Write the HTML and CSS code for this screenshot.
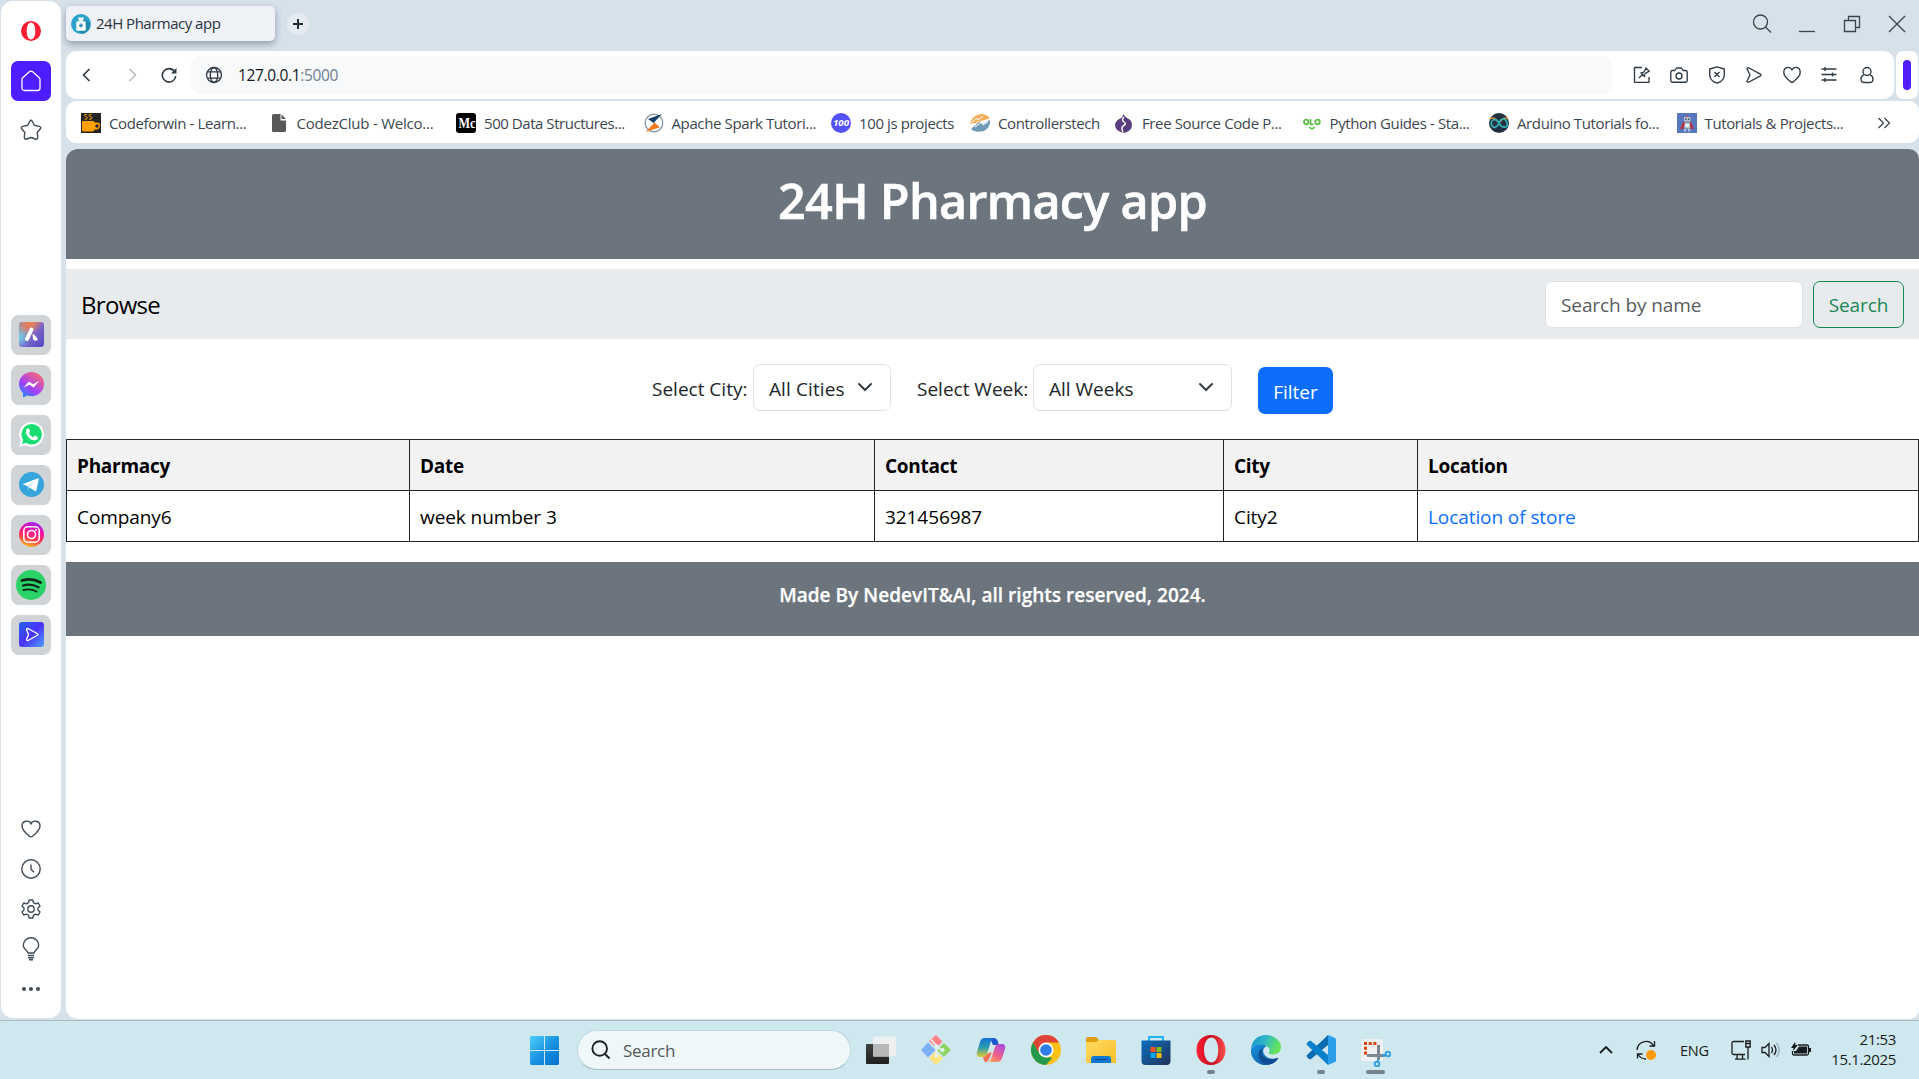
FILE: index.html
```html
<!DOCTYPE html>
<html lang="en">
<head>
<meta charset="utf-8">
<title>24H Pharmacy app</title>
<link rel="stylesheet" href="styles.css">
</head>
<body>
<div class="window">
  <aside class="sidebar">
    <div class="side-top">
      <svg class="side-logo" viewBox="0 0 20 20" width="20" height="20"><path fill="#fa1e34" fill-rule="evenodd" d="M10 0a10 10 0 1 0 0 20a10 10 0 0 0 0-20zM10 1.500c2.800 0 4.300 3.800 4.300 8.500s-1.500 8.500-4.300 8.500s-4.300-3.800-4.300-8.500s1.500-8.500 4.300-8.500z"/></svg>
      <div class="side-home"><svg viewBox="0 0 20 22" width="20" height="22" fill="none" stroke="#fff" stroke-width="1.300"><path d="M1 9.500Q1 8.500 2 7.500L8.300 1.800Q10 .4 11.700 1.800L18 7.500Q19 8.500 19 9.500V18Q19 20.500 16.500 20.500H3.500Q1 20.500 1 18z"/></svg></div>
      <svg class="side-star" viewBox="0 0 22 22" width="22" height="22" fill="none" stroke="#414b55" stroke-width="1.400" stroke-linejoin="round"><path d="M9.700 2.300Q11 .3 12.300 2.300L14.300 6.200L19.300 7.400Q21.700 8.200 20.200 10L17.200 13.500L17.700 18Q17.600 20.800 15.400 20L11 18.500L6.600 20Q4.400 20.800 4.300 18L4.800 13.500L1.800 10Q.3 8.200 2.700 7.400L7.700 6.200z"/></svg>
    </div>
    <div class="side-apps">
      <div class="app"><svg viewBox="0 0 25 25" width="25" height="25"><defs><linearGradient id="aria" x1="0" y1="0" x2="1" y2="1"><stop offset="0" stop-color="#8b91b8"/><stop offset=".25" stop-color="#d07f75"/><stop offset=".5" stop-color="#7e68c5"/><stop offset="1" stop-color="#5148c8"/></linearGradient><radialGradient id="ariaB" cx="0" cy=".6" r=".5"><stop offset="0" stop-color="#66d3f2"/><stop offset="1" stop-color="#66d3f2" stop-opacity="0"/></radialGradient><radialGradient id="ariaC" cx=".45" cy="0" r=".5"><stop offset="0" stop-color="#f0804f"/><stop offset="1" stop-color="#f0804f" stop-opacity="0"/></radialGradient></defs><rect width="25" height="25" rx="3" fill="url(#aria)"/><rect width="25" height="25" rx="3" fill="url(#ariaB)"/><rect width="25" height="25" rx="3" fill="url(#ariaC)"/><path stroke="#fff" stroke-width="4" stroke-linecap="round" d="M12.500 7.500L8 17"/><path fill="#fff" d="M13.500 12q3 .5 5.500 6q-4 2-5-1z"/></svg></div>
      <div class="app"><svg viewBox="0 0 25 26" width="25" height="26"><defs><linearGradient id="msg" x1=".1" y1="1" x2=".8" y2="0"><stop offset="0" stop-color="#1594ff"/><stop offset=".4" stop-color="#a040ff"/><stop offset="1" stop-color="#ff6a70"/></linearGradient></defs><path fill="url(#msg)" d="M12.500 0C5.500 0 0 5 0 12c0 3.500 1.500 6.500 4 9v4.500l4.500-2c8 2.500 16.500-2.500 16.500-11.500C25 5 19.500 0 12.500 0z"/><path fill="#fff" d="M4.500 15.500l5.500-6 4 2.800 6.200-3.600-5.500 6.800-4-2.800z"/></svg></div>
      <div class="app"><svg viewBox="0 0 25 25" width="25" height="25"><path fill="#fff" d="M0 25l1.800-6.300A12.400 12.400 0 1 1 6.500 23.300z"/><circle cx="12.700" cy="12.300" r="10.200" fill="#18dd70"/><path fill="#18dd70" d="M3 22l1.500-5 4 3.500z"/><path fill="#fff" d="M8.200 6.500q1-.7 1.800.2l1.100 2.500q0 .8-1.200 2q1.500 2.800 4.300 4l1.600-1.600l3 1.500q.5 3-3.500 3.500q-6-1-8.500-7.500q-.2-3 1.400-4.600z"/></svg></div>
      <div class="app"><svg viewBox="0 0 25 25" width="25" height="25"><circle cx="12.500" cy="12.500" r="12.500" fill="#36a5dc"/><path fill="#fff" d="M3.500 12.200L19 6.200q1-.3.800 1L17.300 18.500q-.4 1.200-1.500.5L8.500 14z"/><path fill="#c9dff0" d="M8.500 14L17 8.500L10.500 15L9.800 18z"/></svg></div>
      <div class="app"><svg viewBox="0 0 25 25" width="25" height="25"><defs><linearGradient id="ig" x1=".3" y1="1" x2=".6" y2="0"><stop offset="0" stop-color="#ffc020"/><stop offset=".35" stop-color="#ff3a52"/><stop offset=".65" stop-color="#fa10a0"/><stop offset="1" stop-color="#a020f4"/></linearGradient></defs><circle cx="12.500" cy="12.500" r="12.500" fill="url(#ig)"/><g fill="none" stroke="#fff" stroke-width="1.600"><rect x="4.800" y="4.800" width="15.400" height="15.400" rx="4"/><circle cx="12.500" cy="12.500" r="4"/></g><circle cx="17" cy="8" r="1" fill="#fff"/></svg></div>
      <div class="app"><svg class="full" viewBox="0 0 30 30" width="30" height="30"><circle cx="15" cy="15" r="15" fill="#2ad267"/><g fill="none" stroke="#10251a" stroke-linecap="round"><path stroke-width="2.800" d="M6 10.500q10-2.800 18.500 2"/><path stroke-width="2.300" d="M7 15.500q8-2.300 15.500 1.800"/><path stroke-width="1.900" d="M7.500 20q7-1.700 13 1.500"/></g></svg></div>
      <div class="app"><svg viewBox="0 0 25 25" width="25" height="25"><defs><linearGradient id="flow" x1="0" y1="0" x2="1" y2="1"><stop offset="0" stop-color="#2563f5"/><stop offset=".5" stop-color="#4a32f8"/><stop offset="1" stop-color="#4da0ff"/></linearGradient></defs><rect width="25" height="25" rx="3" fill="url(#flow)"/><path fill="none" stroke="#fff" stroke-width="1.300" stroke-linejoin="round" d="M7.500 7.500Q7.500 6 9.500 6.800L18.500 11.800Q19.500 12.500 18.500 13.200L9.500 18.300Q7.500 19 7.500 17.500L9.500 12.500z"/></svg></div>
    </div>
    <div class="side-bottom">
      <svg viewBox="0 0 20 18" width="20" height="18"><path d="M10 4C8.500-.2 1 .2 1 6C1 10 5 13.500 8.500 16.300Q10 17.500 11.500 16.300C15 13.500 19 10 19 6C19 .2 11.500-.2 10 4z"/></svg>
      <svg viewBox="0 0 20 20" width="20" height="20"><circle cx="10" cy="10" r="9.200"/><path d="M10 5.500v4.800l3 3"/></svg>
      <svg viewBox="0 0 20 20" width="20" height="20"><path d="M8.200 1h3.600l.7 2.700 2 1.100 2.800-.8 1.700 3-2 2v2l2 2-1.700 3-2.800-.8-2 1.100-.7 2.700H8.200l-.7-2.700-2-1.100-2.800.8-1.700-3 2-2v-2l-2-2 1.700-3 2.800.8 2-1.100z"/><circle cx="10" cy="10" r="3.200"/></svg>
      <svg viewBox="0 0 18 24" width="18" height="24"><path d="M6 16C6 13.500 1.300 12.500 1.300 8.500a7.700 7.700 0 0 1 15.400 0C16.700 12.500 12 13.500 12 16zM5.800 18.500h6.400M6 20.700h6M7 22.800h4"/></svg>
      <svg class="dots" viewBox="0 0 20 6" width="20" height="6"><circle cx="3" cy="3" r="2"/><circle cx="10" cy="3" r="2"/><circle cx="17" cy="3" r="2"/></svg>
    </div>
  </aside>

  <div class="main">
    <div class="tabbar">
      <div class="tab">
        <svg viewBox="0 0 20 20" width="20" height="20"><circle cx="10" cy="10" r="10" fill="#2ba3cb"/><path fill="#2389ab" d="M13 4l6 5q1 8-7 11L6 16z"/><path fill="#fff" d="M7.300 3.500h5.400v2.500h-1v1.200h1.800q1.200 0 1.200 1.200V15.500q0 1.200-1.200 1.200H6.500q-1.200 0-1.200-1.200V8.400q0-1.200 1.200-1.200h1.800V6h-1z"/><path stroke="#2389ab" stroke-width="1.400" d="M10 9.500v4M8 11.500h4"/></svg>
        <span class="tab-title">24H Pharmacy app</span>
      </div>
      <div class="newtab"><svg viewBox="0 0 10 10" width="10" height="10"><path stroke="#222c35" stroke-width="2" d="M5 0v10M0 5h10"/></svg></div>
      <div class="controls">
        <svg viewBox="0 0 20 20" width="20" height="20" stroke-width="1.700"><circle cx="8.500" cy="8" r="7"/><path d="M13.500 13l5.500 5.500"/></svg>
        <svg viewBox="0 0 20 20" width="20" height="20"><path d="M2 17.500h16"/></svg>
        <svg viewBox="0 0 20 20" width="20" height="20"><path d="M2.500 6.500h11v11h-11zM6.500 6.500v-4h11v11h-4"/></svg>
        <svg viewBox="0 0 20 20" width="20" height="20"><path d="M2 2l16 16M18 2L2 18"/></svg>
      </div>
    </div>

    <div class="toolrow">
      <div class="toolbar">
        <div class="navbtns">
          <svg viewBox="0 0 14 14" width="14" height="14"><path d="M9.500 1L3.500 7l6 6"/></svg>
          <svg class="off" viewBox="0 0 14 14" width="14" height="14"><path d="M4.500 1l6 6-6 6"/></svg>
          <svg viewBox="0 0 16 16" width="16" height="16"><path d="M13.500 4.500A6.700 6.700 0 1 0 14.700 9"/><path fill="#2f3a44" stroke="none" d="M15.500 1v5.500H10z"/></svg>
        </div>
        <div class="url">
          <svg viewBox="0 0 18 18" width="18" height="18"><circle cx="9" cy="9" r="7.500"/><ellipse cx="9" cy="9" rx="3.700" ry="7.500"/><path d="M2.500 5.800h13M2.500 12.200h13"/></svg>
          <span class="url-text">127.0.0.1<span class="port">:5000</span></span>
        </div>
        <div class="actions">
          <svg viewBox="0 0 18 18" width="18" height="18"><path d="M9 1.500H1.500v14.800h14.500V11M6 12l4-4M7.500 6.500l4.500 4.500M8 7q2 .3 3.200-1.300L13 2l3.200 3.200-3.700 2.100Q11 8.500 11.500 10.500"/></svg>
          <svg viewBox="0 0 18 18" width="18" height="18"><path d="M2.500 4.500H5L6.500 2h5L13 4.500h2.500q1.700 0 1.700 1.700V14.500q0 1.700-1.700 1.700h-13q-1.700 0-1.700-1.700V6.200q0-1.700 1.700-1.700z"/><circle cx="9" cy="10" r="3"/></svg>
          <svg viewBox="0 0 18 18" width="18" height="18"><path d="M9 .8L16.300 3V9Q16 15 9 17.200Q2 15 1.700 9V3zM6.500 6l5 5M11.500 6l-5 5"/></svg>
          <svg viewBox="0 0 18 18" width="18" height="18"><path d="M2 3Q2 1.400 4 2L15.500 8.200Q16.800 9 15.500 9.800L4 16Q2 16.600 2 15L5 9z"/></svg>
          <svg viewBox="0 0 18 18" width="18" height="18"><path d="M9 4C7.500.2.800.4.800 6.500C.8 10.500 5 13.500 7.500 15.700Q9 17 10.500 15.700C13 13.500 17.200 10.500 17.200 6.500C17.200.4 10.500.2 9 4z"/></svg>
          <svg viewBox="0 0 18 18" width="18" height="18"><path d="M1.500 3h15M1.500 8.500h15M1.500 14h15M5 1v4M12.500 6.500v4M5 12v4"/></svg>
          <svg viewBox="0 0 18 18" width="18" height="18"><circle cx="9" cy="5.500" r="4"/><path d="M6 8.700Q3 10 3 13.500Q3 16.500 6.500 16.500H11.500Q15 16.500 15 13.500Q15 10 12 8.700"/></svg>
        </div>
      </div>
      <div class="edge-panel"><i></i></div>
    </div>

    <div class="bookmarks">
      <div class="bm"><svg viewBox="0 0 20 20" width="20" height="20"><path fill="#252526" d="M0 0h20v20H0z"/><path fill="#ffa000" d="M1 9q0-1 1-1h10q1 0 2 1.500h2.500q2.500 0 2.500 3t-3 4h-2l-2 2H2l-1-1z"/><circle cx="16" cy="13" r="1.700" fill="#252526"/><path fill="none" stroke="#ffa000" d="M6 1.500q-3-.5-2.500 1t2.300 1.500-.3 2.200h-2M10.500 1.500q-3-.5-2.500 1t2.300 1.500-.3 2.200h-2"/></svg><span class="bt">Codeforwin - Learn...</span></div>
      <div class="bm"><svg viewBox="0 0 20 20" width="20" height="20"><path fill="#57585a" d="M5 1h6.500v6.500H17V17.500q0 1.500-1.500 1.500h-11Q3 19 3 17.500v-15Q3 1 5 1zM12.500 1.200L17 6h-4.500z"/></svg><span class="bt loose">CodezClub - Welco...</span></div>
      <div class="bm"><svg viewBox="0 0 20 20" width="20" height="20"><rect width="20" height="20" rx="3"/><text x="2.500" y="15" font-family="Liberation Serif" font-weight="700" font-size="14" fill="#fff" textLength="17" lengthAdjust="spacingAndGlyphs">Mc</text></svg><span class="bt tight">500 Data Structures...</span></div>
      <div class="bm"><svg viewBox="0 0 20 20" width="20" height="20"><circle cx="10" cy="10" r="8.800" fill="#fff" stroke="#8b9dac" stroke-width="1.400"/><path fill="#173c67" d="M4 6l14-5-8.500 9z"/><path fill="#f57b20" d="M1.500 19L10.500 9.500l5.500 4.800z"/></svg><span class="bt">Apache Spark Tutori...</span></div>
      <div class="bm w5"><svg viewBox="0 0 20 20" width="20" height="20"><circle cx="10" cy="10" r="10" fill="#5450fa"/><text x="2" y="13" font-family="Open Sans" font-style="italic" font-weight="700" font-size="8.500" fill="#fff" textLength="16" lengthAdjust="spacingAndGlyphs">100</text></svg><span class="bt">100 js projects</span></div>
      <div class="bm w6"><svg viewBox="0 0 20 20" width="20" height="20"><path fill="#f5ac5b" d="M0 11Q2 2 11 1q7 0 8.500 4.500L11 8l-4 3-3-1z"/><path fill="#6f9ab6" d="M1 16l8-7 4 2 7-4q1 7-6 11-9 2-13-2z"/><path fill="none" stroke="#fff" d="M2 9l5-4 1 2 5-4M5 14l7-5 1 3 5-3M4 12l5-4"/></svg><span class="bt">Controllerstech</span></div>
      <div class="bm"><svg viewBox="0 0 20 20" width="20" height="20"><path fill="#5a3f80" d="M9 1q1.500 2 4 4 5 2 5 7 0 6-8 8-9-2-9-8 0-4 6-7 2-1 2-4z"/><path fill="none" stroke="#fff" stroke-width="1.500" d="M10 4q-3 3 0 5t-1 4q-2 2 0 6"/></svg><span class="bt">Free Source Code P...</span></div>
      <div class="bm"><svg viewBox="0 0 20 20" width="20" height="20" fill="none" stroke="#58bb3f" stroke-width="1.700"><circle cx="4.200" cy="9" r="2.300"/><circle cx="15.500" cy="9" r="2.300"/><path d="M8.500 6v5.300h3M7.500 14q2.500 3.500 5 0"/></svg><span class="bt">Python Guides - Sta...</span></div>
      <div class="bm"><svg viewBox="0 0 20 20" width="20" height="20"><circle cx="10" cy="10" r="10" fill="#22303f"/><g fill="none" stroke-width="1.700"><path stroke="#d48731" d="M1 6q4-3 8 3M19 6q-4-3-8 3"/><path stroke="#32adb1" d="M10 10C7 4 1 7 2.500 11.500S8 15 10 10S16 4 18 9.500S13 16 10 10"/></g></svg><span class="bt">Arduino Tutorials fo...</span></div>
      <div class="bm"><svg viewBox="0 0 20 20" width="20" height="20"><path fill="#5878bd" d="M0 0h20v20H0z"/><path fill="#b6313b" d="M6 9h2v3l-2.500 4H3zM12 9h2l3 7h-2.500L12 12z"/><path fill="#b8bfc6" d="M7 4h6.500v4.500H7zM7.500 9.500h5.500v6H7.500zM7 16h2.200v2.500H7zM11 16h2.200v2.500H11z"/><path fill="#394463" d="M8.200 5.500h1.300V7H8.200zM11 5.500h1.300V7H11z"/><path fill="#e8f5f5" d="M8.200 11h4v3h-4z"/><path stroke="#d9404a" d="M10.200 2v2"/></svg><span class="bt">Tutorials &amp; Projects...</span></div>
      <svg class="more" viewBox="0 0 14 12" width="14" height="12"><path d="M1.500 1l5 5-5 5M7.500 1l5 5-5 5"/></svg>
    </div>

    <div class="page">
      <header class="hero"><h1>24H Pharmacy app</h1></header>
      <nav class="navbar">
        <a class="brand">Browse</a>
        <form class="search">
          <div class="field"><span>Search by name</span></div>
          <div class="btn-outline"><span>Search</span></div>
        </form>
      </nav>
      <div class="filters">
        <span class="lbl city-lbl">Select City:</span>
        <div class="select city"><span>All Cities</span><svg viewBox="0 0 16 16" width="16" height="16"><path d="M2 5l6 6 6-6"/></svg></div>
        <span class="lbl week-lbl">Select Week:</span>
        <div class="select week"><span>All Weeks</span><svg viewBox="0 0 16 16" width="16" height="16"><path d="M2 5l6 6 6-6"/></svg></div>
        <div class="btn-primary"><span>Filter</span></div>
      </div>
      <table class="results">
        <colgroup><col class="c1"><col class="c2"><col class="c3"><col class="c4"><col></colgroup>
        <tr><th>Pharmacy</th><th>Date</th><th>Contact</th><th>City</th><th>Location</th></tr>
        <tr><td>Company6</td><td>week number 3</td><td>321456987</td><td>City2</td><td><a class="store-link">Location of store</a></td></tr>
      </table>
      <footer class="foot"><span>Made By NedevIT&amp;AI, all rights reserved, 2024.</span></footer>
    </div>
  </div>
</div>

<div class="taskbar">
  <div class="tasks">
    <div class="task start"><svg viewBox="0 0 29 29" width="29" height="29"><defs><linearGradient id="win" x1="0" y1="0" x2="1" y2="1"><stop offset="0" stop-color="#4fd0fc"/><stop offset=".5" stop-color="#1a94e2"/><stop offset="1" stop-color="#0070cf"/></linearGradient></defs><path fill="url(#win)" d="M1 0h13v14H0V1zM15 0h13l1 1v13H15zM0 15h14v14H1l-1-1zM15 15h14v13l-1 1H15z"/></svg></div>
    <div class="tsearch"><svg viewBox="0 0 20 20" width="20" height="20"><circle cx="8.700" cy="8.500" r="7.300"/><path d="M14 14l4.500 4.500"/></svg><span>Search</span></div>
    <div class="task"><svg viewBox="0 0 30 30" width="30" height="30"><defs><linearGradient id="tv" x1="0" y1="0" x2="0" y2="1"><stop offset="0" stop-color="#41413f"/><stop offset="1" stop-color="#1f1f1f"/></linearGradient></defs><rect y="9" width="23" height="20" rx="1" fill="url(#tv)"/><rect x="7" y="1.500" width="23" height="20" rx="1" fill="#eeeff0"/><path fill="#b7b8b9" d="M7 9h16v12.500H7z"/></svg></div>
    <div class="task"><svg viewBox="0 0 30 30" width="30" height="30"><path fill="#ff8387" d="M15 0l6.500 6.500-6 6L8 6z"/><path fill="#7daffc" d="M7 7.500l7.500 7.500L7 22.500 0 15z"/><path fill="#8fd564" d="M23 8l7 7-7 7-7-7z"/><path fill="#ffe47e" d="M15 16.500l7 7-7 6.500-7-7z"/><path fill="none" stroke="#e8f3f1" stroke-width="1.700" d="M10 4.500l5.500 6V21M15.500 11l5 4"/><circle cx="15.500" cy="11" r="1.700" fill="#e8f3f1"/><circle cx="15.500" cy="21" r="2" fill="#e8f3f1"/><circle cx="21.500" cy="15" r="2" fill="#e8f3f1"/></svg></div>
    <div class="task"><svg viewBox="0 0 30 30" width="30" height="30"><defs><linearGradient id="cpA" x1="0" y1="0" x2="0" y2="1"><stop offset="0" stop-color="#1472d3"/><stop offset=".5" stop-color="#2b9db1"/><stop offset="1" stop-color="#e1c92d"/></linearGradient><linearGradient id="cpB" x1=".8" y1="0" x2=".2" y2="1"><stop offset="0" stop-color="#a949e4"/><stop offset=".6" stop-color="#f26288"/><stop offset="1" stop-color="#f5a25d"/></linearGradient></defs><path fill="#1d57cf" d="M14 3h4q2.500 0 3.500 2.500L23 10h-6z"/><path fill="url(#cpA)" d="M9 3h9q-2 0-3 3l-4 13q-1 3-4 3H4q-4 0-3-5L4 7q1-4 5-4z"/><path fill="url(#cpB)" d="M23 9h3q4 0 3 5l-3 9q-1 4-5 4h-9q2 0 3-3l4-12q1-3 4-3z"/><path fill="#f26f51" d="M7 22q3 0 4-3l5-2-3 7q-1 3-3 3t-3-5z"/></svg></div>
    <div class="task"><svg viewBox="0 0 30 30" width="30" height="30"><circle cx="15" cy="15" r="15" fill="#fbc116"/><path fill="#dd4337" d="M2 7.500A15 15 0 0 1 28 7.500H15L8.500 18.700z"/><path fill="#249a4a" d="M2 7.500L8.500 18.700 15 22.500h6.500L15 30A15 15 0 0 1 2 7.500z"/><circle cx="15" cy="15" r="7.500" fill="#fff"/><circle cx="15" cy="15" r="5.800" fill="#2d7de9"/></svg></div>
    <div class="task"><svg viewBox="0 0 30 30" width="30" height="30"><defs><linearGradient id="fold" x1="0" y1="0" x2="1" y2="1"><stop offset="0" stop-color="#ffdb61"/><stop offset="1" stop-color="#f9bf2b"/></linearGradient></defs><path fill="#df9e0b" d="M0 4q0-2 2-2h8l3 3v5H0z"/><path fill="url(#fold)" d="M0 7h10l3-2h15q2 0 2 2v21H0z"/><path fill="#1079cf" d="M5 28v-4q0-3 3-3h14q3 0 3 3v4z"/><path stroke="#0a4e97" stroke-width="1.200" d="M9 24.500h12"/></svg></div>
    <div class="task"><svg viewBox="0 0 30 30" width="30" height="30"><defs><linearGradient id="store" x1="0" y1="0" x2="1" y2="1"><stop offset="0" stop-color="#0870bd"/><stop offset="1" stop-color="#24315b"/></linearGradient></defs><path fill="none" stroke="#1fb7ed" stroke-width="2" d="M8 7V2h14v5"/><path fill="url(#store)" d="M.500 5.500h29V26q0 4-4 4h-21q-4 0-4-4z"/><path fill="#f25325" d="M9.500 12h5v5h-5z"/><path fill="#80ba02" d="M15.500 12h5v5h-5z"/><path fill="#02a6f2" d="M9.500 18h5v5h-5z"/><path fill="#fdb908" d="M15.500 18h5v5h-5z"/></svg></div>
    <div class="task on"><svg viewBox="0 0 30 30" width="30" height="30"><defs><linearGradient id="op" x1="0" y1="0" x2="1" y2="0"><stop offset="0" stop-color="#ff2138"/><stop offset=".5" stop-color="#c20a1c"/><stop offset="1" stop-color="#ff5050"/></linearGradient></defs><path fill="url(#op)" fill-rule="evenodd" d="M15 0C6 0 .5 6.500 .5 15S6 30 15 30S29.500 23.500 29.500 15S24 0 15 0zM15.500 2.500C19.500 2.500 22.300 8 22.300 15S19.500 27.500 15.500 27.500S8 22 8 15S11 2.500 15.500 2.500z"/></svg></div>
    <div class="task"><svg viewBox="0 0 30 30" width="30" height="30"><defs><linearGradient id="ed" x1="0" y1="0" x2="1" y2=".3"><stop offset="0" stop-color="#168cd4"/><stop offset=".5" stop-color="#2db8c7"/><stop offset="1" stop-color="#65e35c"/></linearGradient><linearGradient id="edB" x1="0" y1="0" x2="1" y2="1"><stop offset="0" stop-color="#1396e1"/><stop offset="1" stop-color="#104b94"/></linearGradient></defs><path fill="url(#ed)" d="M0 14C1 5 7 0 15 0c9 0 15 6 15 12 0 5-4 7.500-8 7.500-3 0-5-1-4-2.500 2-3-1-6-5-7Q4 8 0 14z"/><path fill="url(#edB)" d="M0 14Q4 8 12 9.500l4 1.500q-5 2-3.500 7Q16 26 27.500 23 23 30 15 30C6 30-1 23 0 14z"/><path fill="#104b94" d="M12 13q-3 7 3 10.500 6 2 12.500-.8Q23 30 15 29.500 6 26 8 17q1-3 4-4z"/></svg></div>
    <div class="task on"><svg viewBox="0 0 30 30" width="30" height="30"><path fill="#0b6db0" d="M22 0L1 20q-1 1 0 2l2 2q1 .6 2 0L22 10z"/><path fill="#0b80ca" d="M22 30L1 10Q0 9 1 8l2-2q1-.6 2 0l17 14z"/><path fill="#2a9ee8" d="M22 0l7 3q1 .5 1 1.500v21q0 1-1 1.500l-7 3z"/></svg></div>
    <div class="task on wide"><svg viewBox="0 0 30 34" width="30" height="34"><rect y="6" width="22" height="22" rx="2.500" fill="#eff0f2"/><g fill="none" stroke="#d3450d" stroke-width="3" stroke-dasharray="3 1.700"><path d="M3 10.500h13"/><path d="M4.500 13.700v9"/></g><path fill="none" stroke="#7f8890" stroke-width="3" d="M17.500 12v15M6 22.500h18"/><g fill="none" stroke="#35a3df" stroke-width="2"><circle cx="27" cy="21" r="2.300"/><circle cx="16" cy="31" r="2.300"/><path d="M21 22.500l4-.7M17.500 26l-1 3"/></g></svg></div>
  </div>
  <div class="tray">
    <svg class="t-up" viewBox="0 0 14 8" width="14" height="8"><path d="M1 7l6-6 6 6"/></svg>
    <svg class="t-sync" viewBox="0 0 20 20" width="20" height="20"><path d="M1 10A9 9 0 0 1 17.500 5.500M18.500 1v5h-5M1.500 18.500V14h5M2 14.500q3 4.500 8 4.500"/><circle cx="15" cy="15" r="5" fill="#ff9b0d" stroke="none"/></svg>
    <span class="lang">ENG</span>
    <svg class="t-net" viewBox="0 0 20 20" width="20" height="20"><path d="M13 1.500H2.500q-1.500 0-1.500 1.500v10q0 1.500 1.500 1.500H14M6 15v4M11.500 15v4M4 19.200h10.500M14.800 1h4.400v6h-4.400zM17 7.500V19.500M15 3.500h4"/></svg>
    <svg class="t-vol" viewBox="0 0 20 16" width="20" height="16"><path d="M1 5.500h3L8 1.500v13l-4-4H1zM10.500 5q2 3 0 6M13 3q4 5 0 10"/><path stroke="#9ab0b8" d="M15.500 1q5.500 7 0 14"/></svg>
    <svg class="t-bat" viewBox="0 0 20 16" width="20" height="16"><path d="M7 3h9q1.500 0 1.500 1.500v7q0 1.500-1.500 1.500H3q-1.500 0-1.500-1.500V9"/><path fill="#181d20" stroke="none" d="M8 4.500h8v7H3V9h2zM18 6h2v4h-2zM4 0L0 6h2.500L2 9l5-6H4.500z"/></svg>
    <div class="clock"><span class="time">21:53</span><span class="date">15.1.2025</span></div>
  </div>
</div>
</body>
</html>
```
FILE: styles.css
```css
* { box-sizing: border-box; }
body {
  margin: 0;
  width: 1919px;
  height: 1079px;
  overflow: hidden;
  display: flex;
  flex-direction: column;
  background: #d7e1ea;
  font-family: "Open Sans", "Noto Sans", sans-serif;
  color: #212529;
}
svg { display: block; flex: none; }
span { white-space: nowrap; }

.window { display: flex; height: 1020px; padding: 1px; gap: 5px; }

/* sidebar */
.sidebar {
  width: 60px;
  height: 1017px;
  background: #fff;
  border-radius: 12px;
  display: flex;
  flex-direction: column;
  align-items: center;
}
.side-top { display: flex; flex-direction: column; align-items: center; padding-top: 20px; height: 314px; }
.side-home {
  width: 40px; height: 40px; margin-top: 20px; margin-bottom: 18px;
  border-radius: 7px; background: #4f1dff;
  display: flex; align-items: center; justify-content: center;
}
.side-star { margin-right: 1px; }
.side-apps { display: flex; flex-direction: column; gap: 10px; }
.app {
  width: 40px; height: 40px; border-radius: 8px; background: #d0d4d7;
  display: flex; align-items: center; justify-content: center;
}
.app svg { margin: -1px 0 0 1px; }
.app svg.full { margin: 0; }
.side-bottom {
  margin-top: 154px;
  display: grid;
  grid-auto-rows: 40.1px;
  justify-items: center;
  align-items: center;
}
.side-bottom svg { fill: none; stroke: #414b55; stroke-width: 1.4; stroke-linejoin: round; margin-right: 1px; }
.side-bottom .dots { fill: #414b55; stroke: none; margin-right: 0; }

.main { flex: 1; display: flex; flex-direction: column; min-width: 0; }

/* tab strip */
.tabbar { height: 50px; display: flex; align-items: flex-start; padding-top: 5px; }
.tab {
  width: 209px; height: 35px; padding-left: 5px; border-radius: 5px;
  background: #eef1f6; box-shadow: 0 3px 7px rgba(60, 75, 95, .45);
  display: flex; align-items: center; gap: 5px;
}
.tab-title { font-size: 15px; color: #2a343d; letter-spacing: -.5px; margin-top: -1px; }
.newtab {
  width: 22px; height: 22px; margin: 7px 0 0 12px; border-radius: 50%; background: #e5ebf1;
  display: flex; align-items: center; justify-content: center;
}
.controls { margin-left: auto; display: flex; gap: 25px; padding: 8px 11px 0 0; }
.controls svg { fill: none; stroke: #3c444b; stroke-width: 1.3; }

/* address row */
.toolrow { display: flex; gap: 2px; height: 48px; }
.toolbar { width: 1829px; background: #fff; border-radius: 10px; display: flex; align-items: center; }
.navbtns { display: flex; align-items: center; width: 125px; padding-left: 14px; }
.navbtns svg { fill: none; stroke: #2f3a44; stroke-width: 1.6; margin-right: 31px; }
.navbtns svg.off { stroke: #b9bec3; margin-right: 22px; }
.navbtns svg:last-child { margin-right: 0; }
.url {
  width: 1421px; height: 38px; border-radius: 10px; background: #f8f9fb;
  display: flex; align-items: center; padding-left: 14px; gap: 15px;
}
.url svg { fill: none; stroke: #2f3a44; stroke-width: 1.3; }
.url-text { font-size: 15.5px; color: #14181c; letter-spacing: -.35px; }
.port { color: #6d7f90; }
.actions { display: flex; gap: 19.5px; padding-left: 20.5px; }
.actions svg { fill: none; stroke: #2f3a44; stroke-width: 1.35; stroke-linejoin: round; }
.edge-panel { width: 22px; background: #fff; border-radius: 7px; display: flex; align-items: center; justify-content: center; }
.edge-panel i { width: 8px; height: 30px; border-radius: 4px; background: #4f1dff; }

/* bookmarks */
.bookmarks {
  height: 42px; margin-top: 2px; background: #fff; border-radius: 10px;
  display: flex; align-items: center; padding: 2px 0 0 15px; width: 1853px;
}
.bm { display: flex; align-items: center; gap: 8px; width: 187.5px; flex: none; }
.bm.w5 { width: 139px; }
.bm.w6 { width: 144px; }
.bt { font-size: 15px; color: #3d464f; letter-spacing: -.38px; }
.bt.loose { letter-spacing: -.22px; }
.bt.tight { letter-spacing: -.45px; }
.more { fill: none; stroke: #3d464f; stroke-width: 1.3; margin-left: 13px; }

/* page */
.page { margin-top: 6px; height: 870px; width: 1853px; background: #fff; border-radius: 12px 10px 10px 12px; overflow: hidden; }
.hero { height: 110px; background: #6c757d; display: flex; justify-content: center; }
h1 {
  margin: 21px 0 0; font-size: 48.5px; line-height: 60px; font-weight: 600; color: #fff;
  letter-spacing: -.68px; white-space: nowrap; -webkit-text-stroke: .6px #fff;
}
.navbar {
  height: 70px; margin-top: 10px; background: #e8ebee;
  display: flex; align-items: center; justify-content: space-between; padding: 0 15px;
}
.brand { font-size: 24px; color: #000; letter-spacing: -.7px; }
.search { display: flex; gap: 10px; }
.field {
  width: 258px; height: 47px; border: 1px solid #dee2e6; border-radius: 7px; background: #fff;
  display: flex; align-items: center; padding: 2px 0 0 15px; font-size: 19px; color: #595c5f; letter-spacing: -.1px;
}
.btn-outline {
  width: 91px; height: 47px; border: 1px solid #198754; border-radius: 7px; color: #198754; padding-top: 2px;
  display: flex; align-items: center; justify-content: center; font-size: 19px; letter-spacing: -.1px;
}
.filters { height: 100px; display: flex; align-items: flex-start; padding: 25px 0 0 586px; font-size: 19px; letter-spacing: 0; }
.lbl { line-height: 50px; }
.city-lbl { width: 101px; }
.week-lbl { width: 116px; margin-left: 26px; }
.select {
  height: 47px; border: 1px solid #dee2e6; border-radius: 7px;
  display: flex; align-items: center; justify-content: space-between; padding: 2px 17px 0 15px;
}
.select svg { fill: none; stroke: #343a40; stroke-width: 2; stroke-linecap: round; margin-top: -3px; }
.select.city { width: 138px; letter-spacing: .1px; }
.select.week { width: 199px; letter-spacing: 0; }
.btn-primary {
  width: 75px; height: 47px; margin: 3px 0 0 26px; border-radius: 7px; background: #0d6efd; color: #fff;
  display: flex; align-items: center; justify-content: center; padding-top: 2px;
}
.results { width: 1853px; table-layout: fixed; border-collapse: collapse; font-size: 19px; color: #000; letter-spacing: -.08px; }
.results th, .results td { border: 1px solid #212529; height: 51px; padding: 2px 10px 0; text-align: left; }
.results th { background: #f2f2f2; font-weight: 700; letter-spacing: -.28px; }
.c1 { width: 343px; }
.c2 { width: 465px; }
.c3 { width: 349px; }
.c4 { width: 194px; }
.store-link { color: #0d6efd; }
.foot {
  height: 74px; margin-top: 20px; background: #6c757d; color: #fff; font-size: 19px; font-weight: 600;
  letter-spacing: .03px; line-height: 26px; padding-top: 20px; text-align: center; -webkit-text-stroke: .25px #fff;
}

/* taskbar */
.taskbar {
  height: 59px; border-top: 1px solid #a9b8c0; background: #cfe7ee;
  display: flex; justify-content: space-between; padding-left: 517px;
}
.tasks { display: flex; }
.task { width: 55px; height: 58px; display: flex; align-items: center; justify-content: center; position: relative; }
.task.start { width: 60px; padding-right: 5px; }
.task.on::after {
  content: ""; position: absolute; bottom: 5px; left: 24px; width: 8px; height: 4px; border-radius: 2px; background: #75848a;
}
.task.wide::after { left: 18px; width: 19px; }
.tsearch {
  width: 274px; height: 40px; margin: 9px 2px 0 0; border-radius: 20px;
  border: 1px solid #c0d7df; border-bottom-color: #a8bfc8; background: #f0f7f9;
  display: flex; align-items: center; gap: 12px; padding-left: 13px; color: #53595c; font-size: 17px; letter-spacing: -.3px;
}
.tsearch svg { fill: none; stroke: #1e2124; stroke-width: 1.9; }
.tray { display: flex; align-items: center; padding-right: 23px; }
.tray svg { fill: none; stroke: #181d20; stroke-width: 1.3; }
.tray .t-up { stroke-width: 1.8; margin-right: 23px; }
.t-sync { margin-right: 24px; }
.lang { font-size: 14.5px; color: #181d20; width: 51px; letter-spacing: -.2px; }
.t-net { margin-right: 10px; }
.t-vol { margin-right: 10px; }
.clock { width: 85px; margin-top: -2px; display: flex; flex-direction: column; align-items: flex-end; font-size: 15px; line-height: 20px; color: #181d20; letter-spacing: -.35px; }
```
